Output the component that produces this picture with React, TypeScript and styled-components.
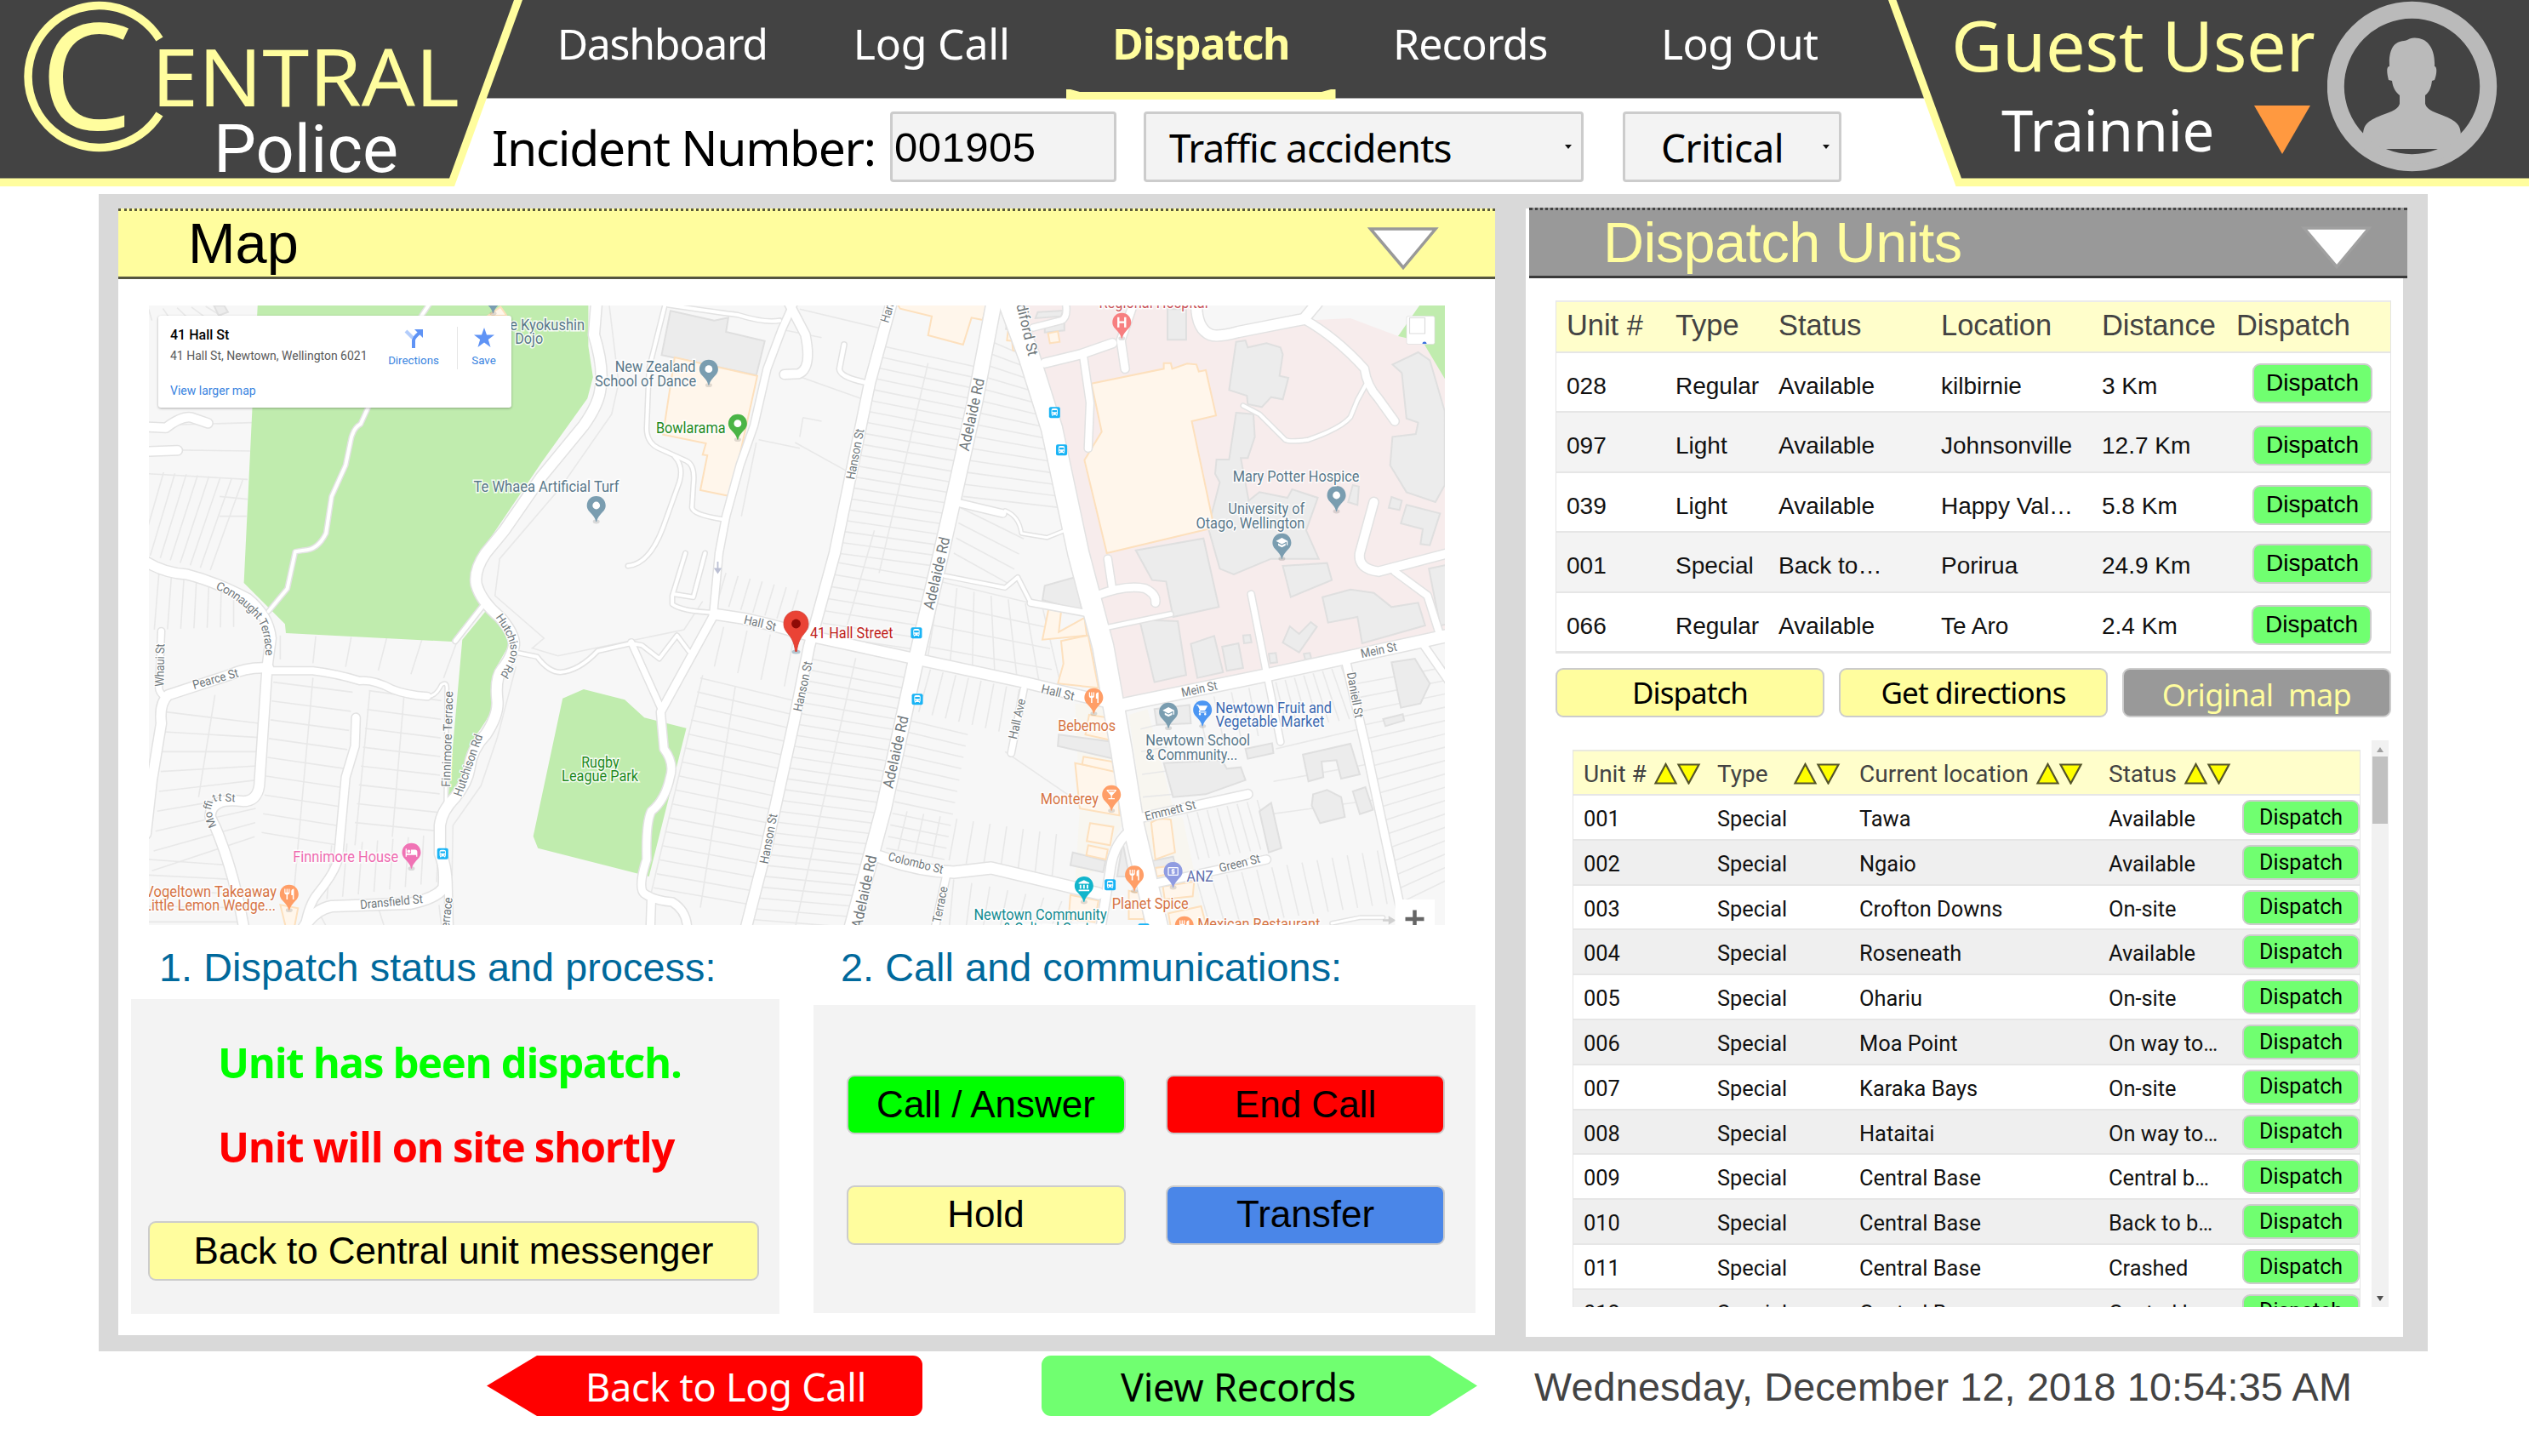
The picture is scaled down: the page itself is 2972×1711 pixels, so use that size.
import React from 'react';
import styled, { createGlobalStyle, css } from 'styled-components';
import {
  MdRestaurant,
  MdShoppingCart,
  MdSchool,
  MdLocalBar,
  MdHotel,
  MdLocalAtm,
  MdAccountBalance,
  MdDirectionsBus,
} from 'react-icons/md';

const yellow = '#fffd9e';
const dark = '#434343';
const line = '#cccccc';
const sans = '"Liberation Sans", Arial, sans-serif';
const noto = '"Noto Sans", "Open Sans", sans-serif';
const roboto = 'Roboto, "Liberation Sans", sans-serif';

const GlobalStyle = createGlobalStyle`
  *, *::before, *::after { box-sizing: border-box; }
  body { margin: 0; background: #fff; font-family: ${sans}; color: #000; }
`;

const Page = styled.div`
  width: 2972px;
  height: 1711px;
  overflow: hidden;
  background: #fff;
`;

/* ---------- header ---------- */

const Header = styled.header`
  display: flex;
  height: 219px;
  background: linear-gradient(${dark} 0 115px, #a5a5a5 115px 116px, #fff 116px);
`;

const Slanted = styled.div`
  position: relative;
  z-index: 0;
  flex: none;
  height: 219px;
  background: ${yellow};
  &::before {
    content: '';
    position: absolute;
    inset: 0;
    z-index: -1;
    background: ${dark};
  }
`;

const Brand = styled(Slanted)`
  width: 614px;
  clip-path: polygon(0 0, 614px 0, 534px 219px, 0 219px);
  &::before {
    clip-path: polygon(0 0, 604px 0, 528px 209.5px, 0 209.5px);
  }
`;

const LogoSvg = styled.svg`
  display: block;
  width: 600px;
  height: 209px;
`;

const Middle = styled.div`
  flex: 1;
  display: flex;
  flex-direction: column;
`;

const Nav = styled.nav`
  display: grid;
  grid-template-columns: repeat(5, 316.5px);
  height: 117px;
  margin-left: 6px;
`;

const NavItem = styled.a<{ $active?: boolean; $track?: number }>`
  position: relative;
  text-align: center;
  font: ${(p) => (p.$active ? 700 : 400)} 50px/102px ${noto};
  letter-spacing: ${(p) => p.$track ?? 0}px;
  white-space: nowrap;
  color: ${(p) => (p.$active ? yellow : '#fff')};
  ${(p) =>
    p.$active &&
    css`
      &::after {
        content: '';
        position: absolute;
        left: 0;
        right: 0;
        bottom: 0;
        height: 12px;
        background: ${yellow};
        clip-path: polygon(0 0, 5px 0, 16px 3px, 300px 3px, 311px 0, 100% 0, 100% 100%, 0 100%);
      }
    `}
`;

const IncidentRow = styled.div`
  display: flex;
  align-items: center;
  height: 83px;
  margin: 14px 0 0 -36px;
`;

const IncidentLabel = styled.label`
  width: 468px;
  font: 57px/80px ${noto};
  letter-spacing: -1.35px;
  white-space: nowrap;
`;

const Field = styled.div<{ $w: number; $gap?: number; $pad: number; $font: string; $track?: number }>`
  display: flex;
  align-items: center;
  justify-content: space-between;
  flex: none;
  width: ${(p) => p.$w}px;
  height: 83px;
  margin-left: ${(p) => p.$gap ?? 0}px;
  padding: 0 11px 0 ${(p) => p.$pad}px;
  border: 3px solid ${line};
  border-radius: 4px;
  background: #f3f3f3;
  font: ${(p) => p.$font};
  letter-spacing: ${(p) => p.$track ?? 0}px;
  white-space: nowrap;
`;

const Caret = styled.span`
  width: 0;
  height: 0;
  border: 4px solid transparent;
  border-top: 5px solid #111;
  border-bottom: 0;
`;

const UserPanel = styled(Slanted)`
  display: flex;
  width: 753px;
  clip-path: polygon(0 0, 753px 0, 753px 219px, 79.5px 219px);
  padding-left: 74px;
  &::before {
    clip-path: polygon(9.5px 0, 753px 0, 753px 209.5px, 86px 209.5px);
  }
`;

const UserInfo = styled.div`
  width: 442px;
  white-space: nowrap;
`;

const UserName = styled.div`
  font: 83px/104px ${noto};
  letter-spacing: -0.4px;
  color: ${yellow};
`;

const UserRole = styled.div`
  display: flex;
  align-items: center;
  justify-content: space-between;
  padding: 0 20px 0 59px;
  font: 67px/96px ${noto};
  letter-spacing: -0.4px;
  color: #fff;
`;

/* ---------- workspace ---------- */

const Workspace = styled.main`
  display: grid;
  grid-template-columns: 1618px 1031px;
  column-gap: 36px;
  width: 2737px;
  height: 1360px;
  margin: 9px 0 0 116px;
  padding: 17px 0 0 23px;
  background: #d9d9d9;
`;

const Panel = styled.section<{ $h: number }>`
  height: ${(p) => p.$h}px;
  background: #fff;
`;

const PanelHeader = styled.div<{ $grey?: boolean }>`
  display: flex;
  align-items: center;
  justify-content: space-between;
  height: 83px;
  margin: ${(p) => (p.$grey ? '-1px -5px 0 4px' : '0')};
  padding: ${(p) => (p.$grey ? '0 40px 2px 87px' : '0 65px 2px 82px')};
  border-top: 3px dotted ${(p) => (p.$grey ? '#444' : '#5a5a3a')};
  border-bottom: 3px solid ${(p) => (p.$grey ? '#3a3a3a' : '#55553f')};
  background: ${(p) => (p.$grey ? '#999' : yellow)};
  color: ${(p) => (p.$grey ? yellow : '#000')};
  font: 66.7px/76px ${sans};
  letter-spacing: ${(p) => (p.$grey ? '-0.6px' : '0')};
`;

const MapFrame = styled.div`
  position: relative;
  width: 1523px;
  height: 728px;
  margin: 31px 0 0 36px;
  overflow: hidden;
`;

const MapSvg = styled.svg`
  display: block;
  font-family: ${roboto};
`;

const PlaceCard = styled.div`
  position: absolute;
  left: 11px;
  top: 12px;
  display: flex;
  width: 415px;
  height: 108px;
  padding: 13px 0 0 14px;
  border-radius: 3px;
  background: #fff;
  box-shadow: 0 1px 3px rgba(0, 0, 0, 0.3);
  font-family: ${roboto};
  white-space: nowrap;
`;

const PlaceText = styled.div`
  width: 254px;
`;

const PlaceTitle = styled.div`
  font: 500 16px/20px ${roboto};
`;

const PlaceAddress = styled.div`
  margin-top: 5px;
  font: 14px/18px ${roboto};
  color: #5b5b5b;
`;

const PlaceLink = styled.a`
  display: block;
  margin-top: 23px;
  font: 14px/18px ${roboto};
  color: #3a84df;
`;

const PlaceAction = styled.div<{ $w: number }>`
  display: flex;
  flex-direction: column;
  align-items: center;
  width: ${(p) => p.$w}px;
  font: 13.3px/18px ${roboto};
  color: #3a84df;
  svg {
    margin: 1px 0 6px;
  }
`;

const PlaceRule = styled.div`
  width: 1px;
  height: 50px;
  margin: 0 15px 0 19px;
  background: #e6e6e6;
`;

const Sections = styled.div`
  display: grid;
  grid-template-columns: 762px 778px;
  column-gap: 40px;
  margin-left: 15px;
`;

const SectionTitle = styled.h2<{ $h: number; $top: number; $left: number }>`
  height: ${(p) => p.$h}px;
  margin: 0;
  padding: ${(p) => p.$top}px 0 0 ${(p) => p.$left}px;
  font: 400 46.7px/${(p) => p.$h - p.$top}px ${sans};
  letter-spacing: 0.1px;
  color: #00699c;
  white-space: nowrap;
`;

const StatusBox = styled.div`
  display: flex;
  flex-direction: column;
  height: 370px;
  padding: 25px 24px 0 20px;
  background: #f3f3f3;
`;

const StatusLine = styled.p<{ $color: string; $track: number }>`
  margin: 0;
  padding-left: 82px;
  font: 700 49px/99px "Open Sans", ${noto};
  letter-spacing: ${(p) => p.$track}px;
  color: ${(p) => p.$color};
  white-space: nowrap;
`;

const Button = styled.button<{ $bg: string; $size?: number; $color?: string; $font?: string; $b?: number; $track?: number; $top?: number }>`
  display: flex;
  align-items: center;
  justify-content: center;
  width: 100%;
  height: 100%;
  padding: ${(p) => p.$top ?? 0}px 0 0;
  border: ${(p) => p.$b ?? 2}px solid ${line};
  border-radius: 9px;
  background: ${(p) => p.$bg};
  color: ${(p) => p.$color ?? '#000'};
  font: ${(p) => p.$size ?? 44}px/1.1 ${(p) => p.$font ?? sans};
  letter-spacing: ${(p) => p.$track ?? 0}px;
  white-space: pre;
`;

const MessengerSlot = styled.div`
  height: 70px;
  margin-top: 38px;
`;

const CallBox = styled.div`
  display: grid;
  grid-template: 70px 70px / 328px 328px;
  gap: 59.5px 47.5px;
  align-content: start;
  height: 362px;
  padding: 82px 0 0 38.5px;
  background: #f3f3f3;
`;

/* ---------- nearest units ---------- */

const NearTable = styled.div`
  width: 982px;
  margin: 26px 0 0 35px;
  border: 1px solid #e4e4e4;
  border-top: 2px solid #ebebeb;
  border-bottom: 3px solid #e4e4e4;
`;

const NearRow = styled.div<{ $shade?: boolean; $head?: boolean }>`
  display: grid;
  grid-template-columns: 128px 121px 191px 189px 158px 193px;
  height: ${(p) => (p.$head ? 58 : 70.4)}px;
  line-height: ${(p) => (p.$head ? 54 : 77)}px;
  font-size: ${(p) => (p.$head ? 34.4 : 28)}px;
  background: ${(p) => (p.$head ? '#fffecb' : p.$shade ? '#f3f3f3' : '#fff')};
  color: ${(p) => (p.$head ? dark : '#111')};
  & + & {
    border-top: 2px solid #e6e6e6;
  }
`;

const NearCell = styled.div`
  padding-left: 12px;
  white-space: nowrap;
`;

const NearAction = styled.div<{ $top: number; $shift: number }>`
  width: 141px;
  height: 47px;
  margin: ${(p) => p.$top}px 0 0 ${(p) => 31 + p.$shift}px;
`;

const Actions = styled.div`
  display: grid;
  grid-template-columns: repeat(3, 316px);
  column-gap: 17px;
  height: 58px;
  margin: 17.5px 0 0 35px;
`;

/* ---------- all units ---------- */

const ListArea = styled.div`
  display: flex;
  width: 959px;
  height: 666px;
  margin: 26.5px 0 0 55px;
  overflow: hidden;
`;

const List = styled.div`
  width: 926px;
  height: 655px;
  margin: 11px 13px 0 0;
  overflow: hidden;
  border: 1px solid #e4e4e4;
  border-top: 2px solid #e9e9df;
  border-bottom: 0;
  font-family: ${roboto};
`;

const ListRow = styled.div<{ $shade?: boolean; $head?: boolean }>`
  display: grid;
  grid-template-columns: 157px 167px 293px 169px 138px;
  height: ${(p) => (p.$head ? 50 : 52.8)}px;
  line-height: ${(p) => (p.$head ? 54 : 55)}px;
  font-size: ${(p) => (p.$head ? 28 : 25.4)}px;
  background: ${(p) => (p.$head ? '#fffecb' : p.$shade ? '#efefef' : '#fff')};
  color: ${(p) => (p.$head ? dark : '#111')};
  & + & {
    border-top: 2px solid #e6e6e6;
  }
`;

const ListCell = styled.div`
  display: flex;
  padding-left: 12px;
  white-space: nowrap;
`;

const SortIcons = styled.svg<{ $x: number }>`
  flex: none;
  width: 56px;
  height: 26px;
  margin: 13px 0 0 auto;
  margin-right: ${(p) => p.$x}px;
`;

const ListAction = styled.div`
  height: 41px;
  margin-top: 5px;
`;

const ScrollTrack = styled.div`
  display: flex;
  flex-direction: column;
  align-items: center;
  justify-content: space-between;
  width: 20px;
  background: #f1f1f1;
`;

const ScrollArrow = styled.span<{ $up?: boolean }>`
  width: 0;
  height: 0;
  border: 4px solid transparent;
  ${(p) =>
    p.$up
      ? css`
          border-bottom: 6px solid #a0a0a0;
          border-top: 0;
          margin-top: 8px;
        `
      : css`
          border-top: 6px solid #505050;
          border-bottom: 0;
          margin-bottom: 7px;
        `}
`;

const ScrollThumb = styled.div`
  width: 18px;
  height: 79px;
  margin: 5px 0 auto;
  background: #c1c1c1;
`;

/* ---------- footer ---------- */

const Footer = styled.footer`
  display: flex;
  align-items: center;
  height: 71px;
  margin: 5px 0 0 572px;
  white-space: nowrap;
`;

const ArrowButton = styled.a<{ $left?: boolean }>`
  width: 512px;
  height: 71px;
  padding-left: ${(p) => (p.$left ? 116 : 93)}px;
  margin-right: ${(p) => (p.$left ? 140 : 67)}px;
  font: 45px/73px ${noto};
  letter-spacing: -0.25px;
  color: ${(p) => (p.$left ? '#fff' : '#000')};
  background: ${(p) => (p.$left ? '#ff0000' : '#70ff70')};
  border-radius: ${(p) => (p.$left ? '0 11px 11px 0' : '11px 0 0 11px')};
  clip-path: ${(p) =>
    p.$left
      ? 'polygon(0 50%, 59px 0, 100% 0, 100% 100%, 59px 100%)'
      : 'polygon(0 0, 456px 0, 100% 50%, 456px 100%, 0 100%)'};
`;

const Clock = styled.time`
  padding-top: 3px;
  font: 46.7px/69px ${sans};
  letter-spacing: 0.19px;
  color: ${dark};
`;

/* ---------- map drawing ---------- */

type Tile = 'A' | 'B' | 'C' | 'D';
const origin: Record<Tile, [number, number]> = { A: [0, 0], B: [1513, 0], C: [0, 1290], D: [1513, 1290] };
const SX = 0.54847;
const SY = 1 / 3;
const toPx = (t: Tile, x: number, y: number): [number, number] => [
  110 + (x + origin[t][0]) * SX,
  220 + (y + origin[t][1]) * SY,
];

const roads: [Tile, number, string][] = [
  ['A', 12, 'M1078 400L1072 520Q1095 640 1085 720Q1080 770 1050 840L960 1020L880 1210L840 1290Q815 1350 820 1400Q830 1460 870 1515Q905 1580 900 1620Q895 1660 875 1700Q860 1730 865 1810Q868 1860 840 1930Q810 1980 805 2050Q800 2100 775 2150Q745 2200 742 2250L742 2350Q755 2400 750 2470Q735 2505 680 2525L510 2535Q475 2545 450 2610'],
  ['C', 8, 'M748 1060Q760 1110 760 1180L762 1320'],
  ['C', 3, 'M755 880L757 480Q758 450 745 465Q735 500 720 505'],
  ['A', 4, 'M720 410L700 460M590 770L572 835Q555 850 550 900L540 980L510 1090L498 1220Q480 1280 450 1280L432 1285L415 1415L375 1495'],
  ['C', 5, 'M832 190L775 310'],
  ['C', 11, 'M110 28Q150 70 200 75Q260 100 330 160Q375 220 380 300L372 400L355 820Q350 875 320 875Q250 860 250 930L262 970Q300 1120 322 1320'],
  ['C', 11, 'M375 405Q330 400 290 430L160 500Q140 530 145 600L125 800L112 990'],
  ['C', 7, 'M145 275L140 470Q138 490 155 510'],
  ['C', 8, 'M375 415L470 415Q520 425 570 450Q600 445 640 480Q670 500 715 505'],
  ['C', 9, 'M562 580L560 680L540 790L525 1060Q525 1110 480 1200Q460 1240 452 1320'],
  ['A', 10, 'M110 845L155 848Q190 805 210 812L245 832M110 932L180 928'],
  ['A', 4, 'M1225 410L1190 640L1185 850Q1185 900 1210 920L1270 965Q1290 980 1285 1050L1282 1130Q1285 1155 1345 1170'],
  ['A', 4, 'M1245 950Q1265 985 1255 1040L1220 1200Q1190 1330 1145 1335'],
  ['A', 10, 'M1490 410L1525 520Q1540 640 1510 658L1480 660'],
  ['A', 8, 'M1500 410L1475 500L1443 640L1415 840L1385 980L1355 1160L1340 1290L1328 1500'],
  ['A', 4, 'M1230 415Q1330 440 1380 450Q1440 480 1470 470'],
  ['C', 12, 'M1330 215L1390 230Q1450 250 1543 295L1753 370L1993 455L2170 525'],
  ['C', 9, 'M1330 215L1215 560L1222 690Q1245 740 1235 790Q1225 870 1195 910Q1183 950 1185 1080Q1165 1180 1180 1200Q1200 1225 1240 1230Q1270 1260 1272 1320M1195 1225L1193 1320'],
  ['C', 7, 'M1152 315L1215 545'],
  ['C', 4, 'M905 350L950 365Q975 420 1000 420Q1040 415 1080 345L1152 318L1175 325L1212 372L1250 290L1275 345'],
  ['C', 4, 'M1268 0L1240 150L1240 180Q1260 205 1330 210M1310 0L1285 155L1245 145'],
  ['B', 12, 'M198 400L150 690L105 1050L75 1290L20 1620L-13 1890L-73 2340L-115 2610'],
  ['B', 17, 'M417 400L375 760L325 1130L303 1290L250 1660L180 2190L110 2620'],
  ['B', 24, 'M447 400L492 600L540 850L597 1290L650 1620L690 1990L715 2250L768 2620'],
  ['D', 10, 'M700 990Q670 1040 665 1120L645 1320'],
  ['B', 10, 'M525 620L600 590L670 550'],
  ['B', 9, 'M715 410L688 540L697 640'],
  ['B', 8, 'M608 600L622 760L618 920'],
  ['B', 7, 'M500 495L560 470Q575 460 570 410'],
  ['B', 12, 'M850 410Q850 500 880 520Q895 530 940 510L1080 465L1108 410'],
  ['B', 9, 'M1080 465Q1150 530 1210 640Q1215 700 1240 745L1275 825'],
  ['B', 4, 'M1215 690L1195 750L1180 810Q1160 850 1090 890Q1050 900 1040 890L985 800L950 770'],
  ['B', 10, 'M1230 1110L1200 1290Q1195 1345 1240 1355L1390 1290'],
  ['D', 8, 'M1275 65L1345 150L1372 290'],
  ['B', 8, 'M345 1115L435 1150'],
  ['B', 3, 'M440 1140Q470 1160 475 1220L530 1235L565 1212'],
  ['B', 5, 'M95 555L85 640Q85 670 140 688'],
  ['D', 8, 'M660 20L670 130'],
  ['D', 9, 'M635 150Q700 110 740 125Q765 145 762 175'],
  ['D', 5, 'M650 265L795 215'],
  ['D', 14, 'M690 535L1000 430L1390 290'],
  ['D', 7, 'M967 145L1000 420L1030 665'],
  ['D', 9, 'M1170 380L1215 700L1292 1290'],
  ['D', 8, 'M1335 320L1390 450'],
  ['D', 4, 'M310 80L440 122L467 85L495 175'],
  ['D', 7, 'M495 175L610 210'],
  ['D', 7, 'M480 480L453 705'],
  ['D', 10, 'M725 935L960 850'],
  ['D', 13, 'M170 1070Q250 1120 330 1125L410 1110L640 1200'],
  ['D', 8, 'M315 1130L290 1320'],
  ['D', 9, 'M760 1165L1000 1080'],
  ['D', 3, 'M1140 1305L1200 1285L1250 1285'],
];

const parks: [Tile, string][] = [
  ['A', 'M352 400L1060 400L1060 560L1070 670L1058 745L960 970L820 1310L808 1390L832 1480L768 1602L412 1572L410 1540L322 1395L340 780Z'],
  ['C', 'M840 205Q895 280 888 330L860 410L855 540Q845 590 815 650L800 760L760 860L790 305Z'],
  ['C', 'M1050 480L1138 517L1180 580L1270 617L1190 1140L952 1040L942 998L1005 512Z'],
  ['B', 'M1335 400L1390 400L1390 675L1382 675L1335 545L1282 525Z'],
];

const pale: [Tile, string][] = [
  ['B', 'M625 692L780 640L780 620L795 620L798 640L830 622L850 625L855 650L870 645L892 805L840 825L888 1200L658 1290L610 962L647 862Z'],
  ['A', 'M1245 600L1422 665L1365 1090L1300 1068L1315 945L1305 943L1312 903L1220 872Z'],
  ['A', 'M845 453L872 422L885 453Z'],
  ['B', 'M205 400L215 428L283 455L275 522L350 555L368 460L392 468L402 400Z'],
  ['D', 'M560 310L618 290L640 475L553 460L565 390Z'],
  ['D', 'M533 198L560 205L555 278L610 228L615 290L520 305Z'],
  ['D', 'M590 740L680 770L685 925L600 900Z'],
  ['D', 'M608 718L670 735L673 770L605 745Z'],
  ['D', 'M622 952L672 965L665 1030L615 1015Z'],
  ['D', 'M618 1030L660 1045L656 1080L614 1065Z'],
  ['D', 'M753 950Q770 930 795 940L804 1055L762 1080Z'],
  ['D', 'M580 1205L640 1225L632 1300L576 1290Z'],
  ['D', 'M620 570L660 580L668 660L612 640Z'],
  ['D', 'M762 1110L805 1100L808 1125L765 1140Z'],
  ['D', 'M778 1175L845 1158L842 1210L782 1220Z'],
  ['D', 'M705 1190L730 1200L738 1290L705 1290Z'],
  ['D', 'M790 1270L860 1245L872 1320L795 1320Z'],
  ['B', 'M446 510L480 515L478 545L444 540ZM455 545L482 550L478 578L457 575Z'],
  ['B', 'M532 515L553 508L557 545L536 550Z'],
  ['C', 'M400 1240L438 1252L430 1320L412 1320Z'],
];

const grey: [Tile, string][] = [
  ['A', 'M1236 436L1330 470L1360 460L1355 510L1438 542L1420 662L1217 592Z'],
  ['A', 'M258 418L280 418L288 440L268 452Z'],
  ['B', 'M935 545L955 540L960 565L1000 550L1030 565L1035 590L1028 665L1047 672L1035 748L1010 740L990 775L960 765L958 735L920 715Z'],
  ['B', 'M935 795L972 800L975 880L960 955L945 955L962 1105L985 1075L1045 1095L1055 1065L1110 1095L1085 1210L1112 1310L1010 1310L930 1365L900 1345L875 1200L900 1040L890 1010L893 960L920 960Z'],
  ['B', 'M788 430L828 430L828 538L788 538Z'],
  ['B', 'M1270 625L1325 582L1350 610L1382 790L1382 1050L1362 1110L1300 1075L1265 980L1270 880L1320 870L1325 830L1300 815L1290 655Z'],
  ['B', 'M720 1280L865 1238L898 1480L800 1515L785 1390L755 1385Z'],
  ['B', 'M1300 1120L1372 1150L1350 1262L1330 1258L1335 1205L1288 1185Z'],
  ['B', 'M1268 1092L1290 1105L1285 1138L1262 1130Z'],
  ['B', 'M1185 1050L1198 1055L1195 1120L1175 1110Z'],
  ['B', 'M510 440L565 435L560 455L505 462ZM525 480L567 475L567 505L525 512ZM445 465L470 470L470 505L442 500Z'],
  ['D', 'M590 85L605 205L520 165L525 115Z'],
  ['D', 'M728 235L810 240L828 430L760 455Z'],
  ['D', 'M838 320L888 292L907 420L852 440Z'],
  ['D', 'M905 330L940 318L950 405L915 415Z'],
  ['D', 'M1035 45L1130 35L1140 95L1052 155Z'],
  ['D', 'M1120 155L1180 128L1230 140L1268 190L1325 175L1340 255L1205 318L1195 225L1132 245Z'],
  ['D', 'M1095 243L1108 260L1070 350L1035 315L1050 258L1070 285Z'],
  ['D', 'M1268 385L1318 372L1350 460L1330 530L1288 545Z'],
  ['D', 'M1348 55L1390 40L1390 250L1372 255Z'],
  ['D', 'M950 290L965 288L968 315L952 318ZM1005 355L1020 352L1023 385L1008 388ZM1080 355L1093 352L1096 372L1083 375Z'],
  ['D', 'M555 640L670 665L673 725L553 680Z'],
  ['D', 'M760 550L835 535L838 600L765 605Z'],
  ['D', 'M780 740L905 730L915 760L945 755L955 800L870 850L800 860Z'],
  ['D', 'M955 690L1012 670L1015 705L960 725Z'],
  ['D', 'M1078 710L1180 672L1200 780L1160 795L1150 730L1118 735L1122 790L1090 805Z'],
  ['D', 'M1100 850L1130 835L1160 860L1168 930L1115 952L1097 890Z'],
  ['D', 'M1185 840L1212 825L1228 905L1200 920Z'],
  ['D', 'M985 910L1010 880L1032 1040L1005 1055Z'],
  ['D', 'M1250 585L1292 568L1295 590L1255 610Z'],
  ['D', 'M585 1055L655 1085L650 1125L580 1100Z'],
  ['D', 'M755 1085L800 1070L805 1105L760 1110Z'],
  ['D', 'M692 1020L706 1140L680 1140Z'],
];

/* rows of parcel boundaries: tile, count, line through the starts, line through the ends */
type Comb = [Tile, number, [number, number, number, number], [number, number, number, number]];
const combs: Comb[] = [
  ['A', 8, [150, 1005, 320, 1030], [100, 1290, 250, 1350]],
  ['A', 3, [118, 840, 118, 1010], [340, 830, 330, 1030]],
  ['A', 2, [270, 1090, 270, 1160], [330, 1100, 328, 1160]],
  ['A', 5, [118, 430, 240, 420], [125, 470, 290, 470]],
  ['B', 20, [178, 560, 80, 1290], [395, 640, 310, 1340]],
  ['B', 1, [275, 620, 275, 620], [170, 1360, 170, 1360]],
  ['B', 14, [405, 540, 350, 1090], [490, 600, 560, 1130]],
  ['B', 4, [345, 1130, 330, 1290], [480, 1240, 450, 1400]],
  ['B', 3, [0, 430, -10, 900], [180, 500, 100, 1000]],
  ['C', 16, [1300, 440, 1200, 1180], [1500, 520, 1410, 1240]],
  ['C', 1, [1375, 470, 1375, 470], [1300, 1250, 1300, 1250]],
  ['C', 1, [1305, 430, 1305, 430], [1190, 1230, 1190, 1230]],
  ['C', 7, [1355, 70, 1510, 130], [1335, 180, 1490, 240]],
  ['C', 4, [1350, 260, 1500, 300], [1330, 400, 1480, 470]],
  ['C', 9, [155, 560, 125, 1120], [355, 600, 345, 1000]],
  ['C', 1, [260, 500, 260, 500], [225, 860, 225, 860]],
  ['C', 9, [385, 455, 360, 985], [555, 490, 525, 1030]],
  ['C', 1, [470, 440, 470, 440], [430, 1180, 430, 1180]],
  ['C', 8, [590, 485, 560, 950], [745, 520, 740, 980]],
  ['C', 1, [665, 505, 665, 505], [640, 1000, 640, 1000]],
  ['C', 1, [592, 485, 592, 485], [560, 1030, 560, 1030]],
  ['C', 7, [140, 70, 300, 140], [130, 270, 300, 260]],
  ['C', 6, [400, 290, 780, 305], [400, 375, 750, 440]],
  ['C', 8, [510, 1030, 740, 990], [500, 1220, 735, 1160]],
  ['C', 5, [118, 1080, 118, 1300], [290, 1100, 310, 1300]],
  ['C', 3, [480, 1260, 740, 1240], [500, 1320, 745, 1310]],
  ['D', 7, [70, 30, 45, 290], [280, 90, 250, 340]],
  ['D', 1, [160, -80, 160, -80], [90, 320, 90, 320]],
  ['D', 25, [15, 370, -115, 1290], [230, 440, 115, 1320]],
  ['D', 1, [120, 370, 120, 370], [-10, 1320, -10, 1320]],
  ['D', 8, [280, 410, 470, 480], [255, 560, 455, 640]],
  ['D', 12, [235, 590, 185, 1040], [360, 640, 310, 1080]],
  ['D', 10, [230, 910, 550, 990], [210, 1050, 540, 1150]],
  ['D', 1, [440, 700, 440, 700], [600, 880, 600, 880]],
  ['D', 7, [300, 110, 520, 190], [275, 360, 560, 470]],
  ['D', 4, [300, 100, 275, 330], [530, 190, 540, 410]],
  ['D', 8, [1020, 455, 1160, 400], [1045, 620, 1200, 580]],
  ['D', 5, [850, 520, 1000, 460], [870, 660, 1020, 640]],
  ['D', 17, [1195, 460, 1290, 1230], [1390, 400, 1390, 1150]],
  ['D', 8, [830, 920, 980, 870], [855, 1080, 1010, 1040]],
  ['D', 3, [1020, 690, 1010, 920], [1200, 620, 1230, 870]],
  ['D', 14, [850, 1150, 1270, 1040], [880, 1320, 1290, 1230]],
  ['D', 8, [330, 1150, 600, 1240], [320, 1320, 575, 1320]],
  ['D', 4, [730, 620, 735, 860], [780, 600, 800, 850]],
];

const combPath = ([, n, a, b]: Comb) => {
  let d = '';
  for (let i = 0; i < n; i++) {
    const k = n === 1 ? 0 : i / (n - 1);
    d += `M${a[0] + (a[2] - a[0]) * k} ${a[1] + (a[3] - a[1]) * k}L${b[0] + (b[2] - b[0]) * k} ${b[1] + (b[3] - b[1]) * k}`;
  }
  return d;
};

const Shapes = ({ items, fill, stroke }: { items: [Tile, string][]; fill: string; stroke?: string }) => (
  <g fill={fill} stroke={stroke} strokeWidth={2}>
    {items.map(([t, d], i) => (
      <path key={i} d={d} transform={`translate(${origin[t].join(' ')})`} vectorEffect="non-scaling-stroke" />
    ))}
  </g>
);

const Roads = ({ casing }: { casing?: boolean }) => (
  <g fill="none" stroke={casing ? '#e2e2e2' : '#fff'} strokeLinecap="round" strokeLinejoin="round">
    {roads.map(([t, w, d], i) => (
      <path
        key={i}
        d={d}
        strokeWidth={casing ? w + 3 : w}
        transform={`translate(${origin[t].join(' ')})`}
        vectorEffect="non-scaling-stroke"
      />
    ))}
  </g>
);

/* street names: tile, text, start point, end point, size */
const streets: [Tile, string, number, number, number, number, number][] = [
  ['B', 'Han', 190, 480, 202, 415, 15],
  ['B', 'Hanson St', 117, 1032, 138, 855, 15],
  ['C', 'Hanson St', 1517, 560, 1540, 385, 15],
  ['C', 'Hanson St', 1445, 1097, 1465, 922, 15],
  ['B', 'Adelaide Rd', 362, 932, 396, 678, 18],
  ['B', 'Adelaide Rd', 286, 1492, 322, 1238, 18],
  ['D', 'Adelaide Rd', 199, 832, 233, 578, 18],
  ['D', 'Adelaide Rd', 132, 1325, 165, 1070, 18],
  ['B', 'diford St', 464, 415, 490, 597, 18],
  ['C', 'Whaui St', 150, 470, 152, 320, 15],
  ['C', 'Pearce St', 215, 480, 312, 435, 15],
  ['C', 'Finnimore Terrace', 764, 825, 770, 487, 15],
  ['C', 'Terrace', 760, 1345, 769, 1215, 15],
  ['C', 'Hutchison Rd', 788, 860, 834, 645, 15],
  ['C', 'Dransfield St', 572, 1255, 706, 1233, 15],
  ['C', 'Hall St', 1392, 248, 1460, 275, 15],
  ['D', 'Hall St', 516, 492, 586, 520, 15],
  ['D', 'Hall Ave', 465, 658, 484, 517, 15],
  ['D', 'Mein St', 820, 507, 896, 480, 15],
  ['D', 'Mein St', 1204, 370, 1281, 343, 15],
  ['D', 'Emmett St', 742, 943, 850, 900, 15],
  ['D', 'Green St', 901, 1125, 988, 1090, 15],
  ['D', 'Daniell St', 1172, 423, 1190, 583, 15],
  ['D', 'Colombo St', 188, 1083, 305, 1130, 15],
  ['D', 'Terrace', 302, 1305, 317, 1178, 15],
];

/* place names: tile, text, left, right, baseline, colour */
const places: [Tile, string, number, number, number, string][] = [
  ['A', 'e Kyokushin', 892, 1052, 504, '#59788a'],
  ['A', 'Dojo', 903, 963, 552, '#59788a'],
  ['A', 'New Zealand', 1117, 1290, 652, '#59788a'],
  ['A', 'School of Dance', 1074, 1291, 702, '#59788a'],
  ['A', 'Bowlarama', 1205, 1354, 868, '#1f8a23'],
  ['A', 'Te Whaea Artificial Turf', 814, 1126, 1073, '#59788a'],
  ['B', 'Regional Hospital', 641, 875, 427, '#c9555b'],
  ['B', 'Mary Potter Hospice', 928, 1199, 1038, '#59788a'],
  ['B', 'University of', 918, 1082, 1153, '#59788a'],
  ['B', 'Otago, Wellington', 849, 1082, 1203, '#59788a'],
  ['C', 'Rugby', 1045, 1126, 755, '#1f8a23'],
  ['C', 'League Park', 1003, 1167, 804, '#1f8a23'],
  ['C', 'Finnimore House', 427, 653, 1090, '#ee6bb0'],
  ['C', 'Vogeltown Takeaway', 110, 392, 1212, '#d67444'],
  ['C', 'Little Lemon Wedge...', 108, 390, 1261, '#d67444'],
  ['D', '41 Hall Street', 22, 200, 299, '#c0211b'],
  ['D', 'Bebemos', 553, 677, 628, '#d67444'],
  ['D', 'Monterey', 516, 640, 886, '#d67444'],
  ['D', 'Newtown Fruit and', 891, 1140, 564, '#3a68b0'],
  ['D', 'Vegetable Market', 891, 1124, 612, '#3a68b0'],
  ['D', 'Newtown School', 741, 965, 679, '#59788a'],
  ['D', '& Community...', 741, 938, 728, '#59788a'],
  ['D', 'ANZ', 829, 886, 1157, '#6170ae'],
  ['D', 'Planet Spice', 669, 833, 1254, '#d67444'],
  ['D', 'Newtown Community', 373, 658, 1293, '#128c92'],
  ['D', '& Cultural Centre', 436, 645, 1341, '#128c92'],
  ['D', 'Mexican Restaurant', 852, 1115, 1325, '#d67444'],
];

type Glyph = 'dot' | 'food' | 'cart' | 'school' | 'bar' | 'bed' | 'cash' | 'hall' | 'H';
const glyphs: Partial<Record<Glyph, React.ComponentType<any>>> = {
  food: MdRestaurant,
  cart: MdShoppingCart,
  school: MdSchool,
  bar: MdLocalBar,
  bed: MdHotel,
  cash: MdLocalAtm,
  hall: MdAccountBalance,
};

/* pins: tile, tip x, head top y, colour, glyph */
const pins: [Tile, number, number, string, Glyph][] = [
  ['A', 856, 355, '#7a9db0', 'dot'],
  ['A', 1318, 608, '#7a9db0', 'dot'],
  ['A', 1380, 800, '#4ab446', 'dot'],
  ['A', 1077, 1089, '#7a9db0', 'dot'],
  ['B', 690, 443, '#f77f80', 'H'],
  ['B', 1150, 1053, '#7a9db0', 'dot'],
  ['B', 1033, 1220, '#7a9db0', 'school'],
  ['C', 681, 1022, '#f073b5', 'bed'],
  ['C', 419, 1169, '#ff9e67', 'food'],
  ['D', 630, 476, '#ff9e67', 'food'],
  ['D', 668, 818, '#ff9e67', 'bar'],
  ['D', 717, 1102, '#ff9e67', 'food'],
  ['D', 824, 1280, '#ff9e67', 'food'],
  ['D', 790, 527, '#7a9db0', 'school'],
  ['D', 863, 520, '#4b96f3', 'cart'],
  ['D', 800, 1089, '#909ce1', 'cash'],
  ['D', 609, 1140, '#12b5cb', 'hall'],
];

const buses: [Tile, number, number][] = [
  ['B', 546, 794],
  ['B', 561, 926],
  ['C', 748, 1060],
  ['D', 250, 281],
  ['D', 252, 515],
  ['D', 665, 1169],
  ['D', 737, 1325],
];

const Pin = ({ x, y, color, glyph }: { x: number; y: number; color: string; glyph: Glyph }) => {
  const Icon = glyphs[glyph];
  return (
    <g transform={`translate(${x} ${y})`}>
      <ellipse cx={0} cy={30} rx={4} ry={2.4} fill="#000" opacity={0.12} />
      <path d="M0 0C-6.4 0-11 4.8-11 11C-11 16-8 18-4.6 22C-2.2 25-1 27-.4 30L.4 30C1 27 2.2 25 4.6 22C8 18 11 16 11 11C11 4.8 6.4 0 0 0Z" fill={color} />
      {glyph === 'dot' && <circle cx={0} cy={11} r={4.4} fill="#fff" />}
      {glyph === 'H' && <path d="M-4 5V17M4 5V17M-4 11H4" stroke="#fff" strokeWidth={2.4} />}
      {Icon && <Icon x={-7.5} y={3.5} size={15} color="#fff" />}
    </g>
  );
};

const CityMap = () => (
  <MapSvg width={1523} height={728} viewBox="175 359 1523 728">
    <rect x={175} y={359} width={1523} height={728} fill="#f7f7f7" />
    <g transform={`translate(110 220) scale(${SX} ${SY})`}>
      <Shapes items={[['B', 'M470 400L850 400L880 520L1080 470L1180 462L1282 525L1335 545L1390 675L1390 1580L690 1820L597 1350L490 600Z']]} fill="#f7ecec" />
      <Shapes
        items={[
          ['D', 'M705 570L745 550L800 900L735 920Z'],
          ['D', 'M590 530L650 540L690 960L640 1110L590 1160L600 900Z'],
          ['D', 'M735 940L820 930L850 1160L870 1320L770 1320Z'],
        ]}
        fill="#f8f6f0"
      />
      <g fill="none" stroke="#e8e8e8" strokeWidth={1.6}>
        {combs.map((c, i) => (
          <path key={i} d={combPath(c)} transform={`translate(${origin[c[0]].join(' ')})`} vectorEffect="non-scaling-stroke" />
        ))}
        <path
          d="M1105 418L1125 690L1110 800L1000 1060L870 1310L860 1440L965 1590L940 1625L995 1652L1265 1560L1305 1460M905 1690L865 1940L830 2110L770 2250L768 2430M1425 890L1513 920M1520 812L1513 880M1520 812L1560 825M1470 500L1560 530M1388 1160L1420 900"
          vectorEffect="non-scaling-stroke"
        />
      </g>
      <Shapes items={parks} fill="#c0ecae" />
      <Shapes items={grey} fill="#ececec" stroke="#dfdfdf" />
      <Shapes items={pale} fill="#fff6eb" stroke="#fde0bd" />
      <Roads casing />
      <Roads />
    </g>

    {streets.map(([t, text, x1, y1, x2, y2, size], i) => {
      const [ax, ay] = toPx(t, x1, y1);
      const [bx, by] = toPx(t, x2, y2);
      const len = Math.hypot(bx - ax, by - ay);
      const angle = (Math.atan2(by - ay, bx - ax) * 180) / Math.PI;
      return (
        <text
          key={i}
          transform={`translate(${ax} ${ay}) rotate(${angle})`}
          fontSize={size - 0.5}
          textLength={len}
          lengthAdjust="spacingAndGlyphs"
          fill="#6f777b"
          stroke="#fff"
          strokeWidth={2.5}
          paintOrder="stroke"
        >
          {text}
        </text>
      );
    })}

    <path id="connaught" d="M253 692Q280 703 302 728Q314 745 312 790" fill="none" />
    <path id="hutchison" d="M582 725Q602 752 600 768Q598 780 583 800" fill="none" />
    <path id="moffitt" d="M255 971Q241 943 257 941L300 944" fill="none" />
    <g fontSize={14} fill="#6f777b" stroke="#fff" strokeWidth={2.5} paintOrder="stroke">
      <text textLength={106}>
        <textPath href="#connaught">Connaught Terrace</textPath>
      </text>
      <text fontSize={13.5} textLength={76}>
        <textPath href="#hutchison">Hutchison Rd</textPath>
      </text>
      <text fontSize={13} textLength={55}>
        <textPath href="#moffitt">Moffitt St</textPath>
      </text>
    </g>

    {pins.map(([t, x, y, color, glyph], i) => {
      const [px, py] = toPx(t, x, y);
      return <Pin key={i} x={px} y={py} color={color} glyph={glyph} />;
    })}

    {buses.map(([t, x, y], i) => {
      const [px, py] = toPx(t, x, y);
      return (
        <g key={i} transform={`translate(${px} ${py})`}>
          <rect x={-6.5} y={-6.5} width={13} height={13} rx={2} fill="#1ab4f5" />
          <MdDirectionsBus x={-5.5} y={-5.5} size={11} color="#fff" />
        </g>
      );
    })}

    <g transform="translate(935.5 718)">
      <ellipse cx={0} cy={48} rx={5} ry={2.5} fill="#6f93a8" opacity={0.5} />
      <path d="M0 0C-8.5 0-14.5 6.4-14.5 15C-14.5 23-9 26-5 33C-2.5 38-1.6 42-.8 47.500L.8 47.500C1.600 42 2.500 38 5 33C9 26 14.500 23 14.500 15C14.500 6.400 8.500 0 0 0Z" fill="#ea4335" stroke="#d23a2e" strokeWidth={0.8} />
      <circle cx={0} cy={15} r={5.4} fill="#8f0a06" />
    </g>

    <path d="M843.5 660V670M840.5 668.5L843.5 673L846.5 668.5Z" stroke="#bcc0d4" strokeWidth={1.8} fill="#bcc0d4" />
    <path d="M1625 1081.5H1635M1633 1078.5L1638 1081.5L1633 1084.5Z" stroke="#d0d0d0" strokeWidth={2.5} fill="#d0d0d0" />

    <g fontSize={17.5} stroke="#fff" strokeWidth={3} strokeOpacity={0.85} paintOrder="stroke">
      {places.map(([t, text, x1, x2, y, color], i) => {
        const [px, py] = toPx(t, x1, y);
        return (
          <text key={i} x={px} y={py} textLength={(x2 - x1) * SX} lengthAdjust="spacingAndGlyphs" fill={color}>
            {text}
          </text>
        );
      })}
    </g>

    <g>
      <rect x={1653} y={371.5} width={33} height={33} rx={2} fill="#fff" stroke="#ddd" strokeWidth={0.7} />
      <path d="M1656.5 373.5H1674.5V392H1656.5Z" fill="#fff" stroke="#dcdcdc" strokeWidth={1.2} />
      <path d="M1671.5 404A2.500 2.500 0 0 1 1676.500 404Z" fill="#3a70e0" />
      <rect x={1639.5} y={1057} width={46.5} height={32} fill="#fff" />
      <path d="M1662.5 1069.5V1091M1651.5 1080H1673.5" stroke="#666" strokeWidth={4.5} />
    </g>
  </MapSvg>
);

/* ---------- data ---------- */

const nearUnits: [string, string, string, string, string, number, number][] = [
  ['028', 'Regular', 'Available', 'kilbirnie', '3 Km', 12, 0],
  ['097', 'Light', 'Available', 'Johnsonville', '12.7 Km', 15, 0],
  ['039', 'Light', 'Available', 'Happy Val…', '5.8 Km', 14.5, 0],
  ['001', 'Special', 'Back to…', 'Porirua', '24.9 Km', 13, 0],
  ['066', 'Regular', 'Available', 'Te Aro', '2.4 Km', 14, -1],
];

const allUnits: [string, string, string][] = [
  ['001', 'Tawa', 'Available'],
  ['002', 'Ngaio', 'Available'],
  ['003', 'Crofton Downs', 'On-site'],
  ['004', 'Roseneath', 'Available'],
  ['005', 'Ohariu', 'On-site'],
  ['006', 'Moa Point', 'On way to…'],
  ['007', 'Karaka Bays', 'On-site'],
  ['008', 'Hataitai', 'On way to…'],
  ['009', 'Central Base', 'Central b…'],
  ['010', 'Central Base', 'Back to b…'],
  ['011', 'Central Base', 'Crashed'],
  ['012', 'Central Base', 'Central b…'],
];

const Sort = ({ x }: { x: number }) => (
  <SortIcons $x={x} viewBox="0 0 56 26">
    <path d="M14.500 2L26.500 24.500H2.500ZM29.500 2.500H53.500L41.500 24.500Z" fill="#ffff00" stroke="#55552a" strokeWidth={2.2} />
  </SortIcons>
);

const PanelArrow = ({ stroke }: { stroke: string }) => (
  <svg width="86" height="70" viewBox="0 0 86 70">
    <path d="M4.500 18H81L43 63.500Z" fill="#fff" stroke={stroke} strokeWidth="3.500" />
  </svg>
);

export default function App() {
  return (
    <Page>
      <GlobalStyle />
      <Header>
        <Brand>
          <LogoSvg viewBox="0 0 600 209">
            <path d="M187.500 46A83.500 83.500 0 1 0 187.500 134" fill="none" stroke={yellow} strokeWidth="9.500" />
            <text x="47" y="151.500" fontFamily={noto} fontSize="173" fill={yellow}>C</text>
            <text x="178" y="124.500" fontFamily={noto} fontSize="94" fill={yellow} textLength="362" lengthAdjust="spacingAndGlyphs">ENTRAL</text>
            <text x="251" y="201.500" fontFamily={roboto} fontSize="78" fill="#fff" textLength="217" lengthAdjust="spacingAndGlyphs">Police</text>
          </LogoSvg>
        </Brand>
        <Middle>
          <Nav>
            <NavItem $track={-1.3}>Dashboard</NavItem>
            <NavItem $track={-0.2}>Log Call</NavItem>
            <NavItem $active $track={-1.3}>Dispatch</NavItem>
            <NavItem $track={-0.9}>Records</NavItem>
            <NavItem $track={-0.5}>Log Out</NavItem>
          </Nav>
          <IncidentRow>
            <IncidentLabel>Incident Number:</IncidentLabel>
            <Field $w={266} $pad={2} $font={`49px/78px ${sans}`} $track={0.5}>001905</Field>
            <Field $w={517} $gap={32} $pad={27} $font={`46px/80px ${noto}`} $track={-0.95}>
              Traffic accidents
              <Caret />
            </Field>
            <Field $w={257} $gap={46} $pad={42} $font={`46px/80px ${noto}`} $track={-0.5}>
              Critical
              <Caret />
            </Field>
          </IncidentRow>
        </Middle>
        <UserPanel>
          <UserInfo>
            <UserName>Guest User</UserName>
            <UserRole>
              Trainnie
              <svg width="66" height="57" viewBox="0 0 66 57">
                <path d="M0 0H66L33 57Z" fill="#ff9940" />
              </svg>
            </UserRole>
          </UserInfo>
          <svg width="200" height="204" viewBox="2735 0 200 204">
            <circle cx="2834.500" cy="101.500" r="89.700" fill="none" stroke="#bababa" strokeWidth="20" />
            <path
              d="M2837 44.500C2830 45 2829 48 2825 48C2813 49 2807 58 2808 78C2804 78 2805 86 2807 94L2811 95C2812 103 2815 108 2820 112V122C2818 130 2806 132 2795 137C2781 143 2777 148 2777 160L2780 175H2889L2892 160C2892 148 2888 143 2874 137C2863 132 2852 130 2850 122V112C2855 108 2857 103 2858 95L2861 94C2864 86 2864 78 2861 78C2862 56 2852 44 2837 44.500Z"
              fill="#bababa"
            />
            <path d="M2777 158Q2800 182 2834.500 184Q2869 182 2892 158V175Q2834 210 2777 175Z" fill="#bababa" />
          </svg>
        </UserPanel>
      </Header>

      <Workspace>
        <Panel $h={1323.5}>
          <PanelHeader>
            Map
            <PanelArrow stroke="#999" />
          </PanelHeader>
          <MapFrame>
            <CityMap />
            <PlaceCard>
              <PlaceText>
                <PlaceTitle>41 Hall St</PlaceTitle>
                <PlaceAddress>41 Hall St, Newtown, Wellington 6021</PlaceAddress>
                <PlaceLink>View larger map</PlaceLink>
              </PlaceText>
              <PlaceAction $w={64}>
                <svg width="24" height="24" viewBox="0 0 24 24">
                  <path d="M3 4L11 12" stroke="#b3cdfb" strokeWidth="4" />
                  <path d="M12 24V15Q12 12 19 6" fill="none" stroke="#5f93f5" strokeWidth="4" />
                  <path d="M13 2H23V12Z" fill="#5f93f5" />
                </svg>
                Directions
              </PlaceAction>
              <PlaceRule />
              <PlaceAction $w={31}>
                <svg width="24" height="24" viewBox="0 0 24 24">
                  <path d="M12 0L15 8.500H24L16.800 14L19.500 23L12 17.500L4.500 23L7.200 14L0 8.500H9Z" fill="#5f93f5" />
                </svg>
                Save
              </PlaceAction>
            </PlaceCard>
          </MapFrame>
          <Sections>
            <div>
              <SectionTitle $h={87} $top={13} $left={33}>1. Dispatch status and process:</SectionTitle>
              <StatusBox>
                <StatusLine $color="#00ff00" $track={-1.3}>Unit has been dispatch.</StatusLine>
                <StatusLine $color="#ff0000" $track={-1.3}>Unit will on site shortly</StatusLine>
                <MessengerSlot>
                  <Button $bg={yellow} $track={-0.1}>Back to Central unit messenger</Button>
                </MessengerSlot>
              </StatusBox>
            </div>
            <div>
              <SectionTitle $h={94} $top={6} $left={32}>2. Call and communications:</SectionTitle>
              <CallBox>
                <Button $bg="#00ff00">Call / Answer</Button>
                <Button $bg="#ff0000">End Call</Button>
                <Button $bg={yellow}>Hold</Button>
                <Button $bg="#4a86e8">Transfer</Button>
              </CallBox>
            </div>
          </Sections>
        </Panel>

        <Panel $h={1326}>
          <PanelHeader $grey>
            Dispatch Units
            <PanelArrow stroke="#a0a0a0" />
          </PanelHeader>
          <NearTable>
            <NearRow $head>
              {['Unit #', 'Type', 'Status', 'Location', 'Distance', 'Dispatch'].map((h) => (
                <NearCell key={h}>{h}</NearCell>
              ))}
            </NearRow>
            {nearUnits.map(([id, type, status, location, distance, top, shift], i) => (
              <NearRow key={id} $shade={i % 2 === 1}>
                <NearCell>{id}</NearCell>
                <NearCell>{type}</NearCell>
                <NearCell>{status}</NearCell>
                <NearCell>{location}</NearCell>
                <NearCell>{distance}</NearCell>
                <NearAction $top={top} $shift={shift}>
                  <Button $bg="#70ff70" $size={28}>Dispatch</Button>
                </NearAction>
              </NearRow>
            ))}
          </NearTable>
          <Actions>
            <Button $bg={yellow} $size={35} $font={noto} $track={-0.95}>Dispatch</Button>
            <Button $bg={yellow} $size={35} $font={noto} $track={-0.85}>Get directions</Button>
            <Button $bg="#999" $color={yellow} $size={36} $font={noto} $track={-0.6} $top={4}>{'Original  map'}</Button>
          </Actions>
          <ListArea>
            <List>
              <ListRow $head>
                <ListCell>Unit #<Sort x={7} /></ListCell>
                <ListCell>Type<Sort x={10} /></ListCell>
                <ListCell>Current location<Sort x={18} /></ListCell>
                <ListCell>Status<Sort x={13} /></ListCell>
                <ListCell />
              </ListRow>
              {allUnits.map(([id, location, status], i) => (
                <ListRow key={id} $shade={i % 2 === 1}>
                  <ListCell>{id}</ListCell>
                  <ListCell>Special</ListCell>
                  <ListCell>{location}</ListCell>
                  <ListCell>{status}</ListCell>
                  <ListAction>
                    <Button $bg="#70ff70" $size={25} $font={roboto}>Dispatch</Button>
                  </ListAction>
                </ListRow>
              ))}
            </List>
            <ScrollTrack>
              <ScrollArrow $up />
              <ScrollThumb />
              <ScrollArrow />
            </ScrollTrack>
          </ListArea>
        </Panel>
      </Workspace>

      <Footer>
        <ArrowButton $left>Back to Log Call</ArrowButton>
        <ArrowButton>View Records</ArrowButton>
        <Clock>Wednesday, December 12, 2018 10:54:35 AM</Clock>
      </Footer>
    </Page>
  );
}
